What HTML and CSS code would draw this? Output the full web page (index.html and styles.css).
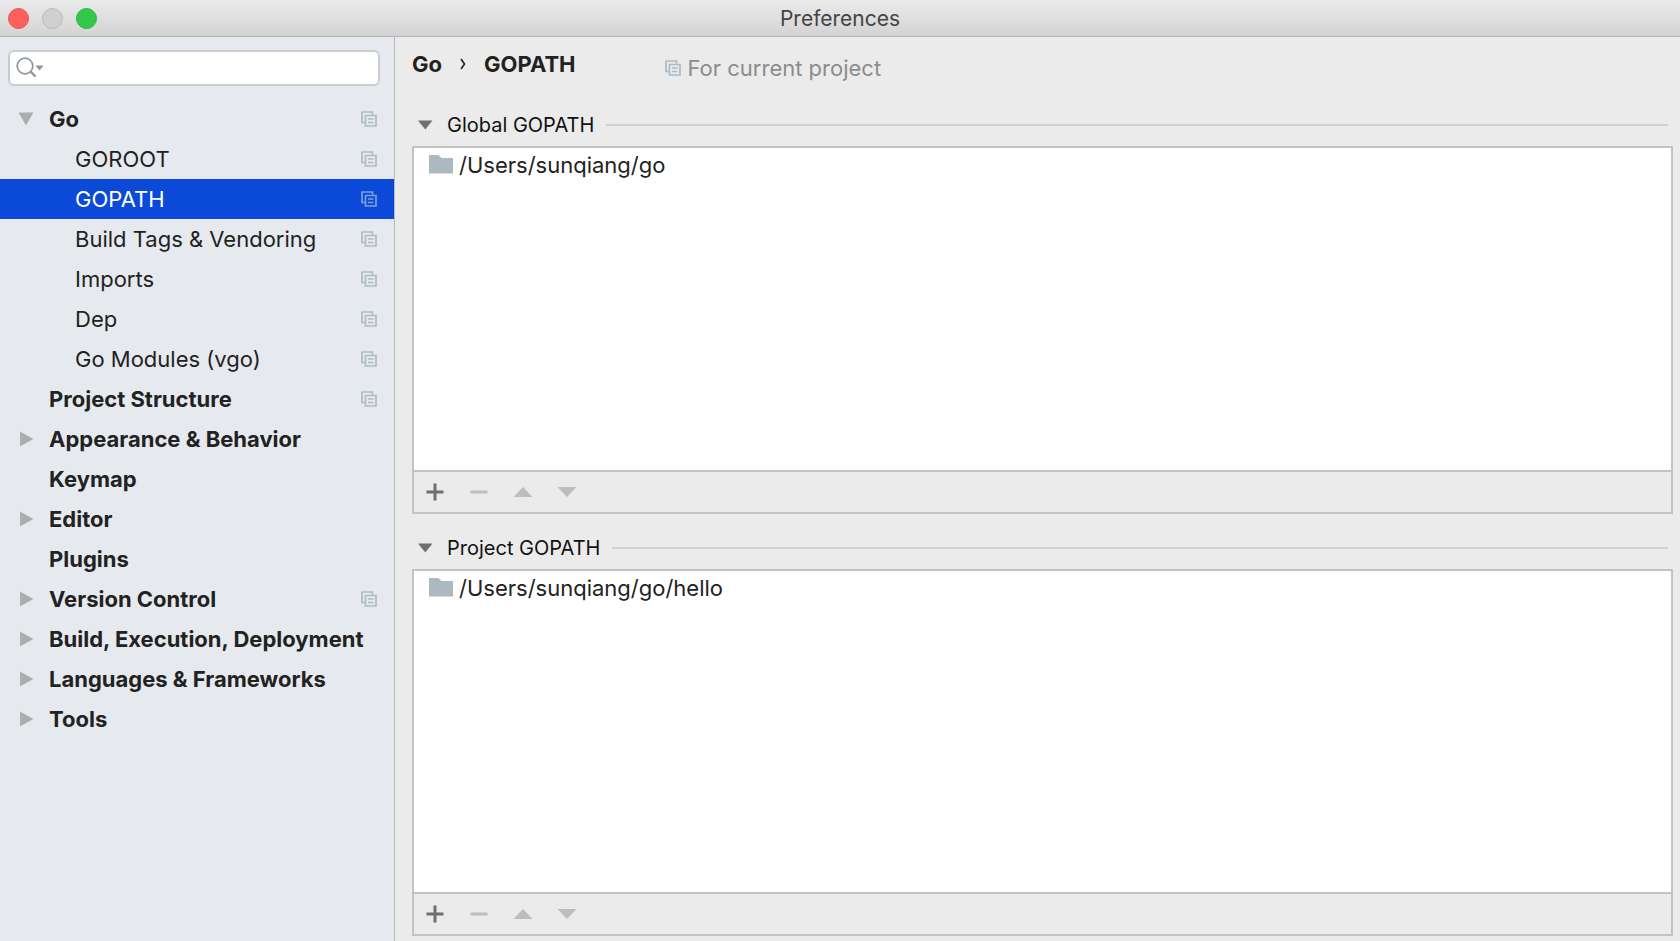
FILE: index.html
```
<!DOCTYPE html>
<html lang="en">
<head>
<meta charset="utf-8">
<title>Preferences</title>
<link rel="stylesheet" href="styles.css">
</head>
<body>
<svg class="defs" aria-hidden="true">
  <symbol id="copy" viewBox="0 0 16 16"><path d="M3.5 11.5H1V1h10.500v2.500M4.500 4.500H15V15H4.500zM7 8h5.500M7 11.500h5.500" fill="none" stroke="currentColor" stroke-width="1.700"/></symbol>
  <symbol id="right" viewBox="0 0 16 16"><path d="M2 .5L15.500 8 2 15.500z" fill="currentColor"/></symbol>
  <symbol id="down" viewBox="0 0 16 16"><path d="M.5 1.500h15L8 14.500z" fill="currentColor"/></symbol>
  <symbol id="fold" viewBox="0 0 16 16"><path d="M1 3.500h14.500L8.250 12.500z" fill="currentColor"/></symbol>
  <symbol id="folder" viewBox="0 0 24 20"><path d="M0 0h8.500q1.500 0 2.500 1.500l1.500 1.500H24v15.500H0z" fill="currentColor"/></symbol>
  <symbol id="add" viewBox="0 0 20 20"><path d="M1.500 10h17M10 1.500v17" stroke="currentColor" stroke-width="3"/></symbol>
  <symbol id="remove" viewBox="0 0 20 20"><path d="M1.500 10h17" stroke="currentColor" stroke-width="3"/></symbol>
  <symbol id="up" viewBox="0 0 20 20"><path d="M.5 15h19L10 5z" fill="currentColor"/></symbol>
  <symbol id="lower" viewBox="0 0 20 20"><path d="M.5 5h19L10 15z" fill="currentColor"/></symbol>
</svg>
<div class="window">
  <header class="titlebar">
    <div class="lights">
      <button class="light close" aria-label="Close"></button>
      <button class="light minimize" aria-label="Minimize"></button>
      <button class="light zoom" aria-label="Zoom"></button>
    </div>
    <h1 class="title">Preferences</h1>
  </header>
  <div class="body">
    <aside class="sidebar">
      <label class="search">
        <svg class="search-icon" viewBox="0 0 28 22" aria-hidden="true"><circle cx="9" cy="9" r="7.800" fill="none" stroke="#8e959c" stroke-width="1.700"/><path d="M14.500 14.500l5 5" stroke="#8e959c" stroke-width="2.400"/><path d="M19.500 8.500h8l-4 5z" fill="#8e959c"/></svg>
        <input class="search-input" type="search" aria-label="Search preferences">
      </label>
      <nav class="tree" aria-label="Categories">
        <button class="row top"><svg class="arrow"><use href="#down"/></svg><span class="label">Go</span><svg class="copy"><use href="#copy"/></svg></button>
        <button class="row child"><span class="label">GOROOT</span><svg class="copy"><use href="#copy"/></svg></button>
        <button class="row child selected" aria-current="page"><span class="label">GOPATH</span><svg class="copy"><use href="#copy"/></svg></button>
        <button class="row child"><span class="label">Build Tags &amp; Vendoring</span><svg class="copy"><use href="#copy"/></svg></button>
        <button class="row child"><span class="label">Imports</span><svg class="copy"><use href="#copy"/></svg></button>
        <button class="row child"><span class="label">Dep</span><svg class="copy"><use href="#copy"/></svg></button>
        <button class="row child"><span class="label">Go Modules (vgo)</span><svg class="copy"><use href="#copy"/></svg></button>
        <button class="row top"><span class="arrow"></span><span class="label">Project Structure</span><svg class="copy"><use href="#copy"/></svg></button>
        <button class="row top"><svg class="arrow"><use href="#right"/></svg><span class="label">Appearance &amp; Behavior</span></button>
        <button class="row top"><span class="arrow"></span><span class="label">Keymap</span></button>
        <button class="row top"><svg class="arrow"><use href="#right"/></svg><span class="label">Editor</span></button>
        <button class="row top"><span class="arrow"></span><span class="label">Plugins</span></button>
        <button class="row top"><svg class="arrow"><use href="#right"/></svg><span class="label">Version Control</span><svg class="copy"><use href="#copy"/></svg></button>
        <button class="row top"><svg class="arrow"><use href="#right"/></svg><span class="label">Build, Execution, Deployment</span></button>
        <button class="row top"><svg class="arrow"><use href="#right"/></svg><span class="label">Languages &amp; Frameworks</span></button>
        <button class="row top"><svg class="arrow"><use href="#right"/></svg><span class="label">Tools</span></button>
      </nav>
    </aside>
    <main class="content">
      <div class="heading">
        <div class="crumbs"><span>Go</span><svg class="chevron" viewBox="0 0 6 12" aria-hidden="true"><path d="M1 1l3.500 5L1 11" fill="none" stroke="#222" stroke-width="1.600"/></svg><span>GOPATH</span></div>
        <div class="scope"><svg class="copy"><use href="#copy"/></svg><span>For current project</span></div>
      </div>
      <section class="group">
        <button class="group-head" aria-expanded="true"><svg class="fold"><use href="#fold"/></svg><span>Global GOPATH</span><span class="rule"></span></button>
        <div class="panel">
          <ul class="paths"><li class="path"><svg class="folder"><use href="#folder"/></svg><span>/Users/sunqiang/go</span></li></ul>
          <div class="tools">
            <button class="tool" aria-label="Add"><svg class="glyph"><use href="#add"/></svg></button>
            <button class="tool" aria-label="Remove" disabled><svg class="glyph"><use href="#remove"/></svg></button>
            <button class="tool" aria-label="Move up" disabled><svg class="glyph"><use href="#up"/></svg></button>
            <button class="tool" aria-label="Move down" disabled><svg class="glyph"><use href="#lower"/></svg></button>
          </div>
        </div>
      </section>
      <section class="group">
        <button class="group-head" aria-expanded="true"><svg class="fold"><use href="#fold"/></svg><span>Project GOPATH</span><span class="rule"></span></button>
        <div class="panel">
          <ul class="paths"><li class="path"><svg class="folder"><use href="#folder"/></svg><span>/Users/sunqiang/go/hello</span></li></ul>
          <div class="tools">
            <button class="tool" aria-label="Add"><svg class="glyph"><use href="#add"/></svg></button>
            <button class="tool" aria-label="Remove" disabled><svg class="glyph"><use href="#remove"/></svg></button>
            <button class="tool" aria-label="Move up" disabled><svg class="glyph"><use href="#up"/></svg></button>
            <button class="tool" aria-label="Move down" disabled><svg class="glyph"><use href="#lower"/></svg></button>
          </div>
        </div>
      </section>
    </main>
  </div>
</div>
</body>
</html>
```
FILE: styles.css
```
* {
  box-sizing: border-box;
}

body {
  margin: 0;
  font-family: Inter, "Liberation Sans", sans-serif;
  font-size: 22px;
  line-height: 28px;
  color: #222;
  background: #ebebeb;
}

button {
  margin: 0;
  padding: 0;
  border: 0;
  background: none;
  font: inherit;
  color: inherit;
  text-align: left;
}

svg {
  display: block;
  flex: none;
}

.defs {
  position: absolute;
  width: 0;
  height: 0;
}

.window {
  display: flex;
  flex-direction: column;
  min-height: 100vh;
}

.titlebar {
  display: grid;
  grid-template-columns: 1fr auto 1fr;
  align-items: center;
  height: 37px;
  padding: 0 8px;
  background: linear-gradient(#ebebeb, #d3d3d3);
  border-bottom: 1px solid #b4b4b4;
}

.lights {
  display: flex;
  gap: 13px;
}

.light {
  width: 21px;
  height: 21px;
  border: 1px solid;
  border-radius: 50%;
}

.close {
  background: #fc615d;
  border-color: #e8524e;
}

.minimize {
  background: #d0d0d0;
  border-color: #bababa;
}

.zoom {
  background: #34c84a;
  border-color: #2bb53f;
}

.title {
  margin: 0;
  padding-top: 2px;
  font-size: 21px;
  font-weight: 400;
  color: #444;
}

.body {
  display: flex;
  flex: 1;
}

.sidebar {
  flex: none;
  width: 395px;
  background: #e6eaef;
  border-right: 1px solid #b9bbbd;
}

.search {
  display: flex;
  align-items: center;
  gap: 4px;
  height: 36px;
  margin: 13px 14px 13px 8px;
  padding: 0 6px;
  background: #fff;
  border: 2px solid #c9ccd0;
  border-radius: 6px;
}

.search-icon {
  width: 28px;
  height: 22px;
}

.search-input {
  flex: 1;
  min-width: 0;
  padding: 0;
  border: 0;
  outline: 0;
  background: none;
  font: inherit;
}

.tree {
  display: flex;
  flex-direction: column;
}

.row {
  display: flex;
  align-items: center;
  height: 40px;
  padding: 0 17px 0 18px;
}

.child {
  padding-left: 75px;
}

.top {
  gap: 15px;
  font-weight: 700;
}

.label {
  flex: 1;
  white-space: nowrap;
}

.selected {
  background: #0b49d9;
  color: #fff;
}

.arrow {
  flex: none;
  width: 16px;
  height: 16px;
  color: #adadad;
}

.copy {
  width: 16px;
  height: 16px;
  color: #aebac2;
}

.selected .copy {
  color: #7f9fdc;
}

.content {
  display: flex;
  flex: 1;
  flex-direction: column;
  gap: 13px;
  min-width: 0;
  padding: 13px 7px 5px 17px;
}

.heading {
  display: flex;
  align-items: flex-start;
  gap: 89px;
  height: 41px;
}

.crumbs {
  display: flex;
  align-items: center;
  gap: 18px;
  font-weight: 700;
}

.chevron {
  width: 6px;
  height: 12px;
}

.scope {
  display: flex;
  align-items: center;
  gap: 7px;
  padding-top: 4px;
  color: #8c8c8c;
}

.group {
  display: flex;
  flex: 1;
  flex-direction: column;
}

.group-head {
  display: flex;
  align-items: center;
  height: 42px;
  padding: 0 5px;
  font-size: 20px;
  color: #111;
}

.fold {
  width: 16px;
  height: 16px;
  margin-right: 14px;
  color: #707070;
}

.rule {
  flex: 1;
  height: 2px;
  margin-left: 12px;
  background: #d0d0d0;
}

.panel {
  display: flex;
  flex: 1;
  flex-direction: column;
  border: 2px solid #c3c3c3;
}

.paths {
  flex: 1;
  margin: 0;
  padding: 3px 15px;
  list-style: none;
  background: #fff;
}

.path {
  display: flex;
  align-items: center;
  gap: 6px;
}

.folder {
  width: 24px;
  height: 20px;
  color: #adb9c1;
}

.tools {
  display: flex;
  align-items: center;
  gap: 24px;
  height: 42px;
  padding: 0 11px;
  border-top: 2px solid #c3c3c3;
}

.tool {
  color: #6e6e6e;
}

.tool:disabled {
  color: #bdbdbd;
}

.glyph {
  width: 20px;
  height: 20px;
}
```
